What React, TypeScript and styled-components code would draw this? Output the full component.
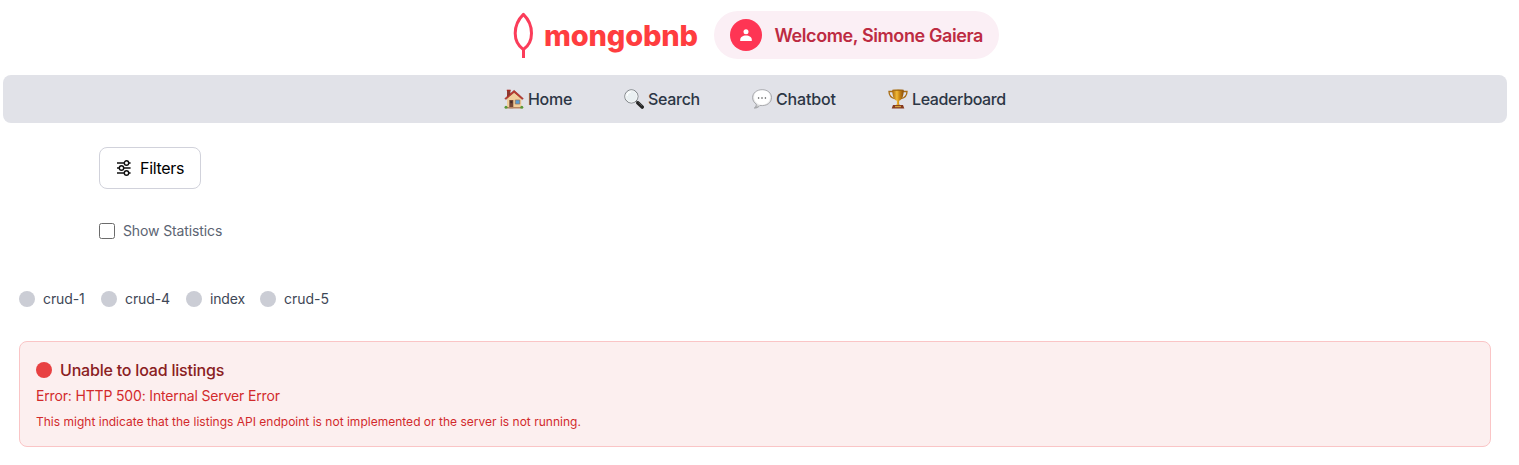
import React from 'react';
import styled, { createGlobalStyle } from 'styled-components';

const GlobalStyle = createGlobalStyle`
  *, *::before, *::after { box-sizing: border-box; }
  body {
    margin: 0;
    background: #fff;
    font-family: Inter, "Liberation Sans", sans-serif;
    color: #1f2937;
  }
  svg { display: block; flex: none; }
  p, h3 { margin: 0; }
`;

const Page = styled.div`
  height: 465px;
  padding: 11px 12px 0 3px;
  overflow: hidden;
`;

const Header = styled.header`
  display: flex;
  align-items: center;
  height: 48px;
  margin-bottom: 16px;
  padding-left: 510px;
`;

const Logo = styled.div`
  display: flex;
  align-items: center;
  width: 201px;
  height: 48px;
`;

const Wordmark = styled.span`
  margin-left: 10px;
  padding-top: 2px;
  font-size: 29px;
  line-height: 48px;
  font-weight: 800;
  letter-spacing: -0.15px;
  white-space: nowrap;
  color: #ff3d3f;
`;

const UserPill = styled.div`
  display: flex;
  align-items: center;
  gap: 12.5px;
  width: 285px;
  height: 48px;
  padding: 0 16px;
  border-radius: 24px;
  background: #fbeff5;
`;

const Avatar = styled.div`
  display: flex;
  align-items: center;
  justify-content: center;
  flex: none;
  width: 32px;
  height: 32px;
  border-radius: 50%;
  background: #fe3554;
`;

const Text = styled.span<{ $size: number; $weight?: number; $color: string; $spacing?: number }>`
  font-size: ${p => p.$size}px;
  font-weight: ${p => p.$weight ?? 400};
  color: ${p => p.$color};
  letter-spacing: ${p => p.$spacing ?? 0}px;
  white-space: nowrap;
`;

const Nav = styled.nav`
  display: flex;
  align-items: center;
  justify-content: center;
  gap: 52px;
  height: 48px;
  border-radius: 8px;
  background: #e1e2e8;
`;

const NavItem = styled.a<{ $width: number }>`
  display: flex;
  align-items: center;
  gap: 4px;
  width: ${p => p.$width}px;
  line-height: 24px;
`;

const Controls = styled.section`
  display: flex;
  flex-direction: column;
  align-items: flex-start;
  padding: 24px 0 0 96px;
`;

const FilterButton = styled.button`
  display: flex;
  align-items: center;
  gap: 8px;
  width: 102px;
  height: 42px;
  padding: 0 16px;
  border: 1px solid #d1d2db;
  border-radius: 8px;
  background: #fff;
  font-family: inherit;
`;

const CheckRow = styled.label`
  display: flex;
  align-items: center;
  gap: 8px;
  height: 20px;
  margin-top: 32px;

  ${Text} { padding-bottom: 2px; }
`;

const Checkbox = styled.input`
  appearance: none;
  width: 16px;
  height: 16px;
  margin: 0;
  border: 1px solid #6b6b6b;
  border-radius: 2.5px;
  background: #fff;
`;

const StatusList = styled.div`
  display: flex;
  height: 20px;
  margin: 48px 0 0 16px;
`;

const Status = styled.div<{ $width: number }>`
  display: flex;
  align-items: center;
  gap: 8px;
  width: ${p => p.$width}px;

  ${Text} { padding-bottom: 2px; }
`;

const Dot = styled.span<{ $color: string }>`
  flex: none;
  width: 16px;
  height: 16px;
  border-radius: 50%;
  background: ${p => p.$color};
`;

const Alert = styled.section`
  height: 106px;
  margin: 32px 16px 0;
  padding: 16px;
  border: 1px solid #fac5c6;
  border-radius: 8px;
  background: #fcefef;
`;

const AlertTitle = styled.h3`
  display: flex;
  align-items: center;
  gap: 8px;
  height: 24px;
`;

const AlertLine = styled.p<{ $height: number; $top: number }>`
  display: flex;
  align-items: center;
  height: ${p => p.$height}px;
  margin-top: ${p => p.$top}px;

  ${Text} { padding-bottom: 2px; }
`;

const Leaf = () => (
  <svg width="21" height="48" viewBox="0 0 21 48" fill="none" stroke="#fb3d5a">
    <path d="M10.4 3.4C6.3 7.4 2.2 13.5 2.2 22.3c0 7.5 3.6 13 8.2 16.3 4.8-3.3 8.1-8.8 8.1-16.3 0-8.8-4-14.9-8.1-18.9Z" strokeWidth="3" strokeLinejoin="round" />
    <path d="M10.5 38v9" strokeWidth="3" />
  </svg>
);

const Person = () => (
  <svg width="14" height="14" viewBox="0 0 14 14" fill="#fff">
    <circle cx="7" cy="3.700" r="2.500" />
    <path d="M1.200 13v-1.100C1.200 9.300 3.600 7.600 7 7.600s5.800 1.700 5.800 4.300V13Z" />
  </svg>
);

const House = () => (
  <svg width="20" height="20" viewBox="0 0 20 20">
    <path d="M3 1.200h3.400V6L3 9Z" fill="#8d3a30" />
    <path d="M2.800.7h3.800v1.400H2.800Z" fill="#a9281f" />
    <path d="M3 9.200 10.300 3l7 6.200v9.600H3Z" fill="#f1cf9c" />
    <path d="M.8 9.500 10.100 1.300l9.200 8.200-1 1-8.200-7.100-8.300 7.100Z" fill="#c3392f" stroke="#7f2923" strokeWidth=".5" />
    <path d="M5.300 11h4v8.200h-4Z" fill="#754634" />
    <path d="M6.300 12h2v2.200h-2Z" fill="#4a2b26" />
    <path d="M11.300 11h4.500v4h-4.500Z" fill="#5b9ed2" stroke="#967057" strokeWidth=".7" />
    <path d="M3 18h14v1.500H3Z" fill="#b98561" />
    <circle cx="2" cy="18.200" r="1.500" fill="#5b9839" />
    <circle cx="17.800" cy="18.200" r="1.500" fill="#5b9839" />
  </svg>
);

const Magnifier = () => (
  <svg width="20" height="20" viewBox="0 0 20 20">
    <path d="m12.200 12.200 2 2" stroke="#777" strokeWidth="2" />
    <path d="m14 14 4.200 4" stroke="#252525" strokeWidth="3.600" strokeLinecap="round" />
    <path d="m14.500 13.600 3.600 3.300" stroke="#777" strokeWidth=".6" />
    <circle cx="7.400" cy="7.400" r="6.600" fill="#eaf0f2" stroke="#747a7e" strokeWidth="1" />
    <circle cx="7.400" cy="7.400" r="5.800" fill="none" stroke="#fafafa" strokeWidth=".7" />
    <path d="M3 7c.3-2.300 2-3.800 4-4" fill="none" stroke="#fff" strokeWidth="1.200" />
  </svg>
);

const Bubble = () => (
  <svg width="20" height="20" viewBox="0 0 20 20">
    <defs>
      <radialGradient id="bubble" cx=".5" cy=".4" r=".6">
        <stop offset=".65" stopColor="#fff" />
        <stop offset="1" stopColor="#b5b6b8" />
      </radialGradient>
    </defs>
    <path d="M10.200.7C4.700.7.6 4 .6 8.600c0 3 1.600 5.200 3.700 6.500 0 1.800-.7 3-2 4 2.600.1 4.300-1 5.600-2.600 7 .8 11.600-2.700 11.600-7.900 0-4.600-3.900-7.900-9.300-7.900Z" fill="url(#bubble)" stroke="#9b9c9f" strokeWidth=".8" />
    <g fill="#4b4b4d">
      <circle cx="6.600" cy="9" r=".8" />
      <circle cx="10" cy="9" r=".8" />
      <circle cx="13.400" cy="9" r=".8" />
    </g>
  </svg>
);

const Trophy = () => (
  <svg width="20" height="20" viewBox="0 0 20 20">
    <defs>
      <linearGradient id="gold">
        <stop offset="0" stopColor="#a9660c" />
        <stop offset=".4" stopColor="#f0b936" />
        <stop offset=".6" stopColor="#cf8c15" />
        <stop offset="1" stopColor="#8a4d0a" />
      </linearGradient>
    </defs>
    <path d="M5 2.500H1c0 4.500 2 6.300 6 7.200M15 2.500h4c0 4.500-2 6.300-6 7.200" fill="none" stroke="#a96d14" strokeWidth="1.300" />
    <path d="M4.300.8h11.400c0 6-1.200 9.700-4.600 11v3.500l2.200 1.700H6.700l2.200-1.700v-3.500C5.500 10.500 4.300 6.800 4.300.8Z" fill="url(#gold)" />
    <ellipse cx="10" cy="1.100" rx="5.700" ry=".7" fill="#99600f" />
    <path d="M5 16h10l1.300 3.500H3.700Z" fill="#873b20" />
    <path d="M7 16.900h6v1.300H7Z" fill="#d3a23c" />
  </svg>
);

const Sliders = () => (
  <svg width="16" height="16" viewBox="0 0 16 16" fill="none" stroke="#111" strokeWidth="1.400">
    <path d="M1 3h7.200M12.800 3H14.600M1 8h2.200M7.800 8H14.600M1 13h7.200M12.800 13H14.600" />
    <circle cx="10.500" cy="3" r="2.200" />
    <circle cx="5.500" cy="8" r="2.200" />
    <circle cx="10.500" cy="13" r="2.200" />
  </svg>
);

const navItems = [
  { label: 'Home', icon: <House />, width: 68, spacing: -0.3 },
  { label: 'Search', icon: <Magnifier />, width: 76, spacing: -0.3 },
  { label: 'Chatbot', icon: <Bubble />, width: 84, spacing: -0.18 },
  { label: 'Leaderboard', icon: <Trophy />, width: 118, spacing: -0.38 },
];

const statuses = [
  { label: 'crud-1', width: 82, spacing: -0.12 },
  { label: 'crud-4', width: 85, spacing: -0.12 },
  { label: 'index', width: 74, spacing: -0.15 },
  { label: 'crud-5', width: 70, spacing: 0 },
];

export default function App() {
  return (
    <>
      <GlobalStyle />
      <Page>
        <Header>
          <Logo>
            <Leaf />
            <Wordmark>mongobnb</Wordmark>
          </Logo>
          <UserPill>
            <Avatar><Person /></Avatar>
            <Text $size={18} $weight={600} $color="#bd2b42" $spacing={-0.4}>Welcome, Simone Gaiera</Text>
          </UserPill>
        </Header>
        <Nav>
          {navItems.map(item => (
            <NavItem key={item.label} $width={item.width}>
              {item.icon}
              <Text $size={16} $weight={500} $color="#2c3645" $spacing={item.spacing}>{item.label}</Text>
            </NavItem>
          ))}
        </Nav>
        <Controls>
          <FilterButton>
            <Sliders />
            <Text $size={16} $color="#000" $spacing={-0.32}>Filters</Text>
          </FilterButton>
          <CheckRow>
            <Checkbox type="checkbox" />
            <Text $size={14} $color="#5b6472" $spacing={-0.12}>Show Statistics</Text>
          </CheckRow>
        </Controls>
        <StatusList>
          {statuses.map(status => (
            <Status key={status.label} $width={status.width}>
              <Dot $color="#cbcdd5" />
              <Text $size={14} $color="#3e4756" $spacing={status.spacing}>{status.label}</Text>
            </Status>
          ))}
        </StatusList>
        <Alert>
          <AlertTitle>
            <Dot $color="#e84142" />
            <Text $size={16} $weight={500} $color="#8a2022" $spacing={-0.2}>Unable to load listings</Text>
          </AlertTitle>
          <AlertLine $height={20} $top={4}>
            <Text $size={14} $color="#d22a2c" $spacing={-0.16}>Error: HTTP 500: Internal Server Error</Text>
          </AlertLine>
          <AlertLine $height={16} $top={8}>
            <Text $size={12} $color="#d22a2c" $spacing={0.01}>This might indicate that the listings API endpoint is not implemented or the server is not running.</Text>
          </AlertLine>
        </Alert>
      </Page>
    </>
  );
}
